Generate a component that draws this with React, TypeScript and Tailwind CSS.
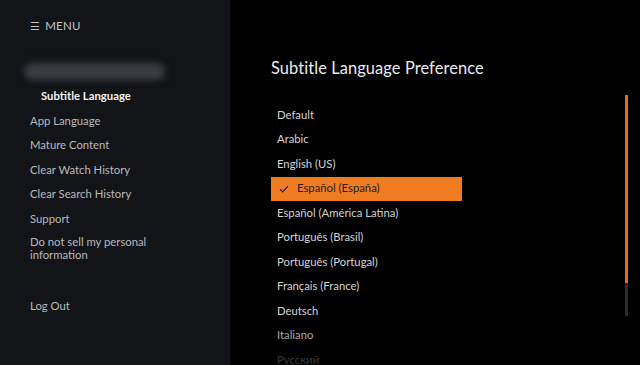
import React from 'react';

const settings = [
  'App Language',
  'Mature Content',
  'Clear Watch History',
  'Clear Search History',
  'Support',
];

const languages = [
  'Default',
  'Arabic',
  'English (US)',
  'Español (España)',
  'Español (América Latina)',
  'Português (Brasil)',
  'Português (Portugal)',
  'Français (France)',
  'Deutsch',
  'Italiano',
  'Русский',
];

const selected = 'Español (España)';

function CheckIcon() {
  return (
    <svg width="10" height="8" viewBox="0 0 10 8" fill="none" className="shrink-0">
      <path d="M1 4.2 L3.6 6.8 L9 1.2" stroke="#1a1a1a" strokeWidth="1.2" />
    </svg>
  );
}

export default function App() {
  return (
    <div
      className="flex h-[365px] w-[640px] overflow-hidden bg-black"
      style={{ fontFamily: 'Lato, "Open Sans", sans-serif' }}
    >
      {/* sidebar */}
      <aside className="flex w-[230px] shrink-0 flex-col bg-[#131418] pl-[30px] pt-[17px]">
        <div className="flex items-center gap-[5px] text-[11.5px] tracking-[0.2px] text-[#c4c4c6]">
          <span className="text-[11px] leading-none">☰</span>
          <span>MENU</span>
        </div>

        <div className="ml-[-6px] mt-[29px] h-[17px] w-[141px] rounded-full bg-[#3b3c41] blur-[3px]" />

        <div className="mt-[8px] pl-[11px] text-[11.3px] font-bold leading-[16px] text-[#f2f2f2]">
          Subtitle Language
        </div>

        <nav className="mt-[8.5px] flex flex-col gap-[8.5px] text-[11.3px] leading-[16px] text-[#b9b9bc]">
          {settings.map((s) => (
            <div key={s}>{s}</div>
          ))}
          <div className="w-[135px] leading-[13px]">Do not sell my personal information</div>
        </nav>

        <div className="mt-[37px] text-[11.3px] leading-[16px] text-[#b9b9bc]">Log Out</div>
      </aside>

      {/* main */}
      <main className="relative flex-1 pl-[41px] pt-[56px]">
        <h1 className="text-[16.4px] leading-[24px] tracking-[0.1px] text-[#ececec]">
          Subtitle Language Preference
        </h1>

        <ul className="mt-[23px] flex w-[191px] flex-col">
          {languages.map((l, i) => {
            const isSel = l === selected;
            const color =
              i === languages.length - 1
                ? 'text-[#3a3a3a]'
                : i === languages.length - 2
                  ? 'text-[#a9a9a9]'
                  : 'text-[#d4d4d4]';
            return (
              <li
                key={l}
                className={
                  isSel
                    ? 'flex h-[24.5px] items-center gap-[8px] bg-[#f07c22] pl-[8px] text-[11.3px] text-[#1c1c1c]'
                    : `flex h-[24.5px] items-center pl-[6px] text-[11.3px] ${color}`
                }
              >
                {isSel && <CheckIcon />}
                <span>{l}</span>
              </li>
            );
          })}
        </ul>

        {/* scroll indicator */}
        <div className="absolute left-[395px] top-[95px] flex w-[3px] flex-col">
          <div className="h-[188px] bg-[#e06e1e]" />
          <div className="h-[33px] bg-[#2a2b2f]" />
        </div>
      </main>
    </div>
  );
}
